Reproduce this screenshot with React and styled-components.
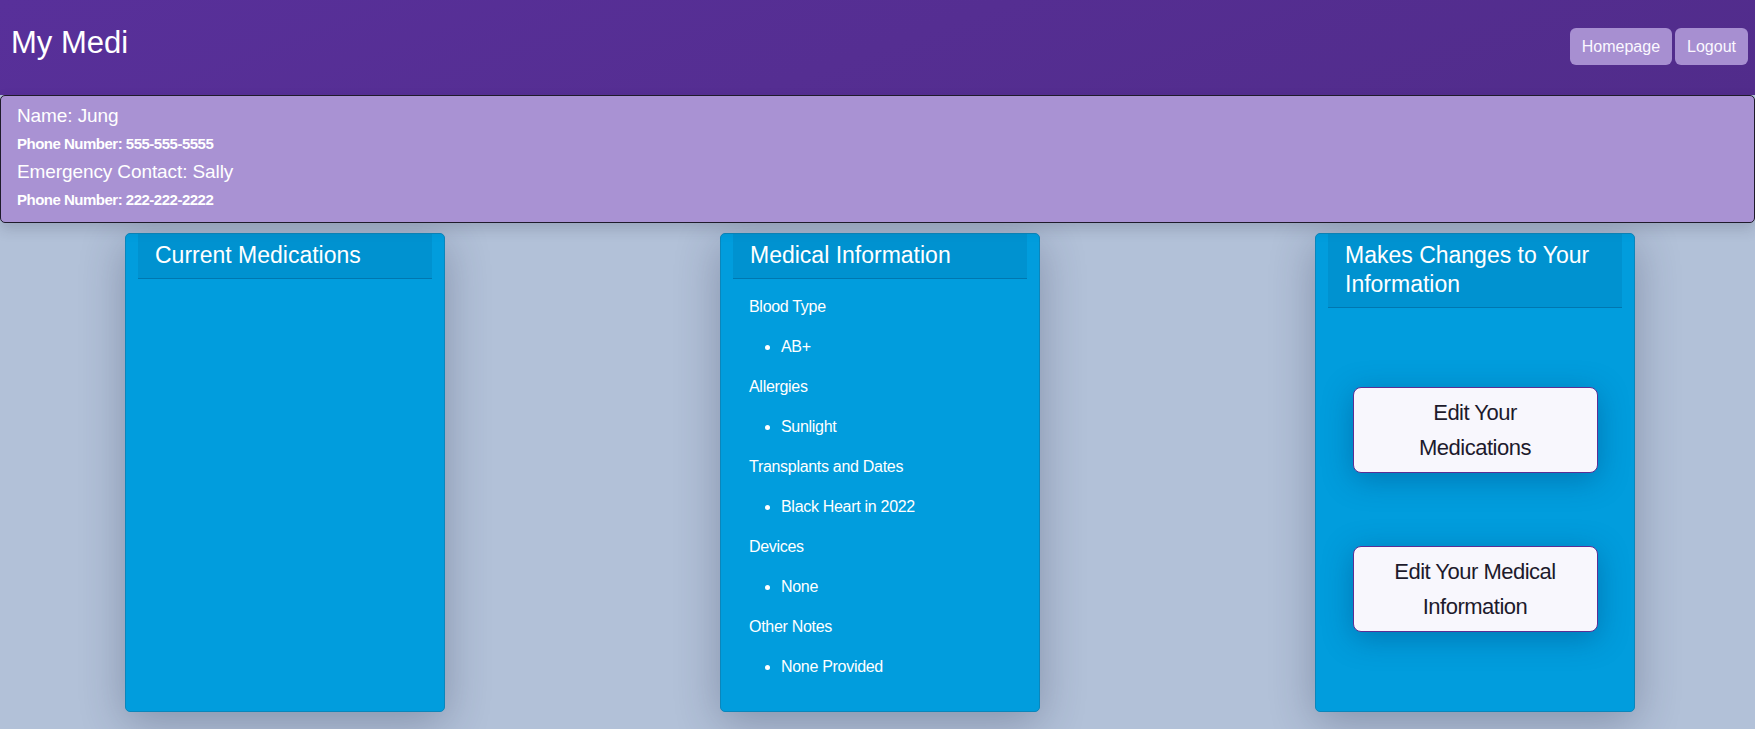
import React from "react";
import styled, { createGlobalStyle } from "styled-components";

const GlobalStyle = createGlobalStyle`
  html, body {
    margin: 0;
    padding: 0;
    background: #b2c1d8;
    font-family: "Liberation Sans", Arial, sans-serif;
    color: #fff;
  }
  body { min-height: 100vh; }
  * { box-sizing: border-box; }
`;

const Page = styled.div`
  min-height: 100vh;
  display: flex;
  flex-direction: column;
`;

const NavBar = styled.header`
  height: 95px;
  display: flex;
  justify-content: space-between;
  align-items: flex-start;
  padding: 0 7px 0 11px;
  background: linear-gradient(160deg, #58309a 0%, #552e92 50%, #512c8b 100%);
`;

const Brand = styled.div`
  font-size: 31px;
  line-height: 36px;
  margin-top: 25px;
  color: #fff;
`;

const NavButtons = styled.nav`
  display: flex;
  gap: 3px;
  margin-top: 28px;
`;

const NavButton = styled.button`
  height: 37px;
  padding: 0 12px;
  border: none;
  border-radius: 6px;
  background: #a78fd1;
  color: #fbf8ff;
  font-family: inherit;
  font-size: 16px;
  line-height: 37px;
  cursor: pointer;
`;

const InfoBar = styled.section`
  position: relative;
  z-index: 1;
  background: #a992d3;
  border: 1px solid #1f1b2b;
  border-radius: 5px;
  padding: 6px 16px 7px;
  box-shadow: 0 6px 14px rgba(40, 40, 60, 0.18);
`;

const InfoLine = styled.div`
  color: #fff;
  font-size: ${(p) => (p.$small ? "15px" : "19px")};
  font-weight: ${(p) => (p.$small ? 700 : 400)};
  letter-spacing: ${(p) => (p.$small ? "-0.5px" : "-0.1px")};
  line-height: ${(p) => p.$lh}px;
`;

const CardsRow = styled.main`
  display: flex;
  align-items: stretch;
  gap: 275px;
  padding: 10px 0 17px 125px;
`;

const Card = styled.div`
  width: 320px;
  display: flex;
  flex-direction: column;
  padding: 0 12px;
  background: #019ddd;
  border: 1px solid #0b86bb;
  border-radius: 5px;
  box-shadow: 0 10px 45px rgba(35, 45, 75, 0.32);
`;

const CardHeader = styled.h2`
  margin: 0;
  padding: 7px 17px 8px;
  font-size: 23px;
  font-weight: 400;
  line-height: 29px;
  color: #fff;
  background: rgba(0, 30, 60, 0.08);
  border-bottom: 1px solid rgba(0, 40, 80, 0.25);
`;

const CardBody = styled.div`
  flex: 1;
  padding: 16px;
  display: flex;
  flex-direction: column;
  ${(p) =>
    p.$centered &&
    `
    align-items: center;
    justify-content: center;
    gap: 73px;
  `}
`;

const Label = styled.p`
  margin: 0 0 16px;
  font-size: 16px;
  line-height: 24px;
  letter-spacing: -0.3px;
`;

const List = styled.ul`
  margin: 0 0 16px;
  padding-left: 32px;
  font-size: 16px;
  line-height: 24px;
  letter-spacing: -0.3px;
`;

const EditButton = styled.button`
  width: 245px;
  padding: 7px 24px;
  background: #f8f7fd;
  color: #1d1a2c;
  border: 1px solid #5b2f94;
  border-radius: 8px;
  font-family: inherit;
  font-size: 22px;
  line-height: 35px;
  letter-spacing: -0.5px;
  box-shadow: 0 6px 30px rgba(0, 50, 100, 0.35);
  cursor: pointer;
`;

const medical = [
  ["Blood Type", "AB+"],
  ["Allergies", "Sunlight"],
  ["Transplants and Dates", "Black Heart in 2022"],
  ["Devices", "None"],
  ["Other Notes", "None Provided"],
];

export default function App() {
  return (
    <Page>
      <GlobalStyle />
      <NavBar>
        <Brand>My Medi</Brand>
        <NavButtons>
          <NavButton>Homepage</NavButton>
          <NavButton>Logout</NavButton>
        </NavButtons>
      </NavBar>
      <InfoBar>
        <InfoLine $lh={27}>Name: Jung</InfoLine>
        <InfoLine $small $lh={30}>Phone Number: 555-555-5555</InfoLine>
        <InfoLine $lh={26}>Emergency Contact: Sally</InfoLine>
        <InfoLine $small $lh={30}>Phone Number: 222-222-2222</InfoLine>
      </InfoBar>
      <CardsRow>
        <Card>
          <CardHeader>Current Medications</CardHeader>
          <CardBody />
        </Card>
        <Card>
          <CardHeader>Medical Information</CardHeader>
          <CardBody>
            {medical.map(([label, item]) => (
              <React.Fragment key={label}>
                <Label>{label}</Label>
                <List>
                  <li>{item}</li>
                </List>
              </React.Fragment>
            ))}
          </CardBody>
        </Card>
        <Card>
          <CardHeader>Makes Changes to Your Information</CardHeader>
          <CardBody $centered>
            <EditButton>Edit Your Medications</EditButton>
            <EditButton>Edit Your Medical Information</EditButton>
          </CardBody>
        </Card>
      </CardsRow>
    </Page>
  );
}
